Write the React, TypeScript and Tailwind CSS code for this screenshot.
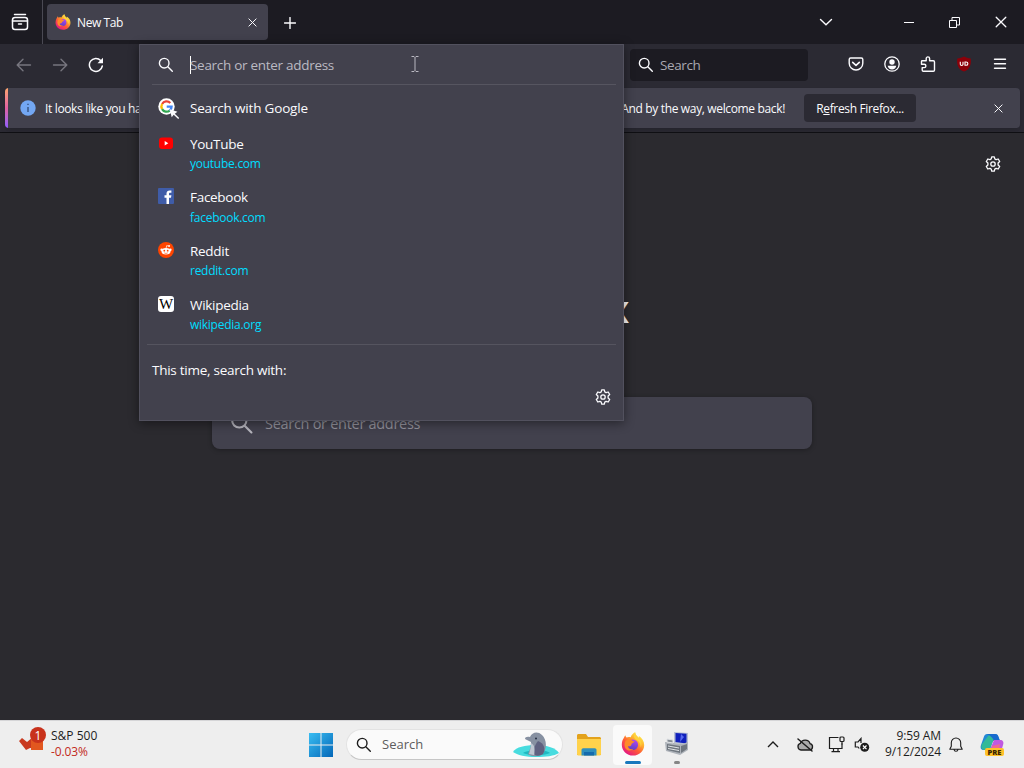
import React from 'react';

interface IconProps {
  className?: string;
}

interface Site {
  name: string;
  url: string;
  icon: React.ReactNode;
}

const SearchIcon: React.FC<IconProps> = ({ className }) => (
  <svg viewBox="0 0 16 16" fill="none" stroke="currentColor" strokeWidth="1.4" strokeLinecap="round" className={className}>
    <circle cx="6.2" cy="6.2" r="4.8" />
    <path d="M9.8 9.8l4.500 4.500" />
  </svg>
);

const GearIcon: React.FC<IconProps> = ({ className }) => (
  <svg viewBox="0 0 16 16" fill="none" stroke="currentColor" strokeWidth="1.3" strokeLinejoin="round" className={className}>
    <path d="M6.7 .8h2.6l.5 2.1 1.3.8 2.1-.7 1.5 2.5-1.6 1.5v2l1.6 1.5-1.5 2.5-2.1-.7-1.3.8-.5 2.1H6.7l-.5-2.1-1.3-.8-2.1.7-1.5-2.5L2.9 9V7L1.3 5.5 2.8 3l2.1.7 1.3-.8z" />
    <circle cx="8" cy="8" r="2.2" />
  </svg>
);

const CloseIcon: React.FC<IconProps> = ({ className }) => (
  <svg viewBox="0 0 10 10" fill="none" stroke="currentColor" strokeWidth="1.1" strokeLinecap="round" className={className}>
    <path d="M1 1l8 8M9 1L1 9" />
  </svg>
);

const FirefoxIcon: React.FC<IconProps> = ({ className }) => (
  <svg viewBox="0 0 24 24" className={className}>
    <defs>
      <linearGradient id="ffBody" x1="0.85" y1="0.1" x2="0.2" y2="0.95">
        <stop offset="0" stopColor="#fff44f" />
        <stop offset=".3" stopColor="#ffb02e" />
        <stop offset=".6" stopColor="#ff5a36" />
        <stop offset="1" stopColor="#e31587" />
      </linearGradient>
      <linearGradient id="ffGlobe" x1="0.6" y1="0" x2="0.3" y2="1">
        <stop offset="0" stopColor="#b146f0" />
        <stop offset="1" stopColor="#5b3fc4" />
      </linearGradient>
    </defs>
    <path fill="url(#ffBody)" d="M2.5 6.5C3 5.2 3.8 4.1 4.3 3.3c.2 1 .6 1.7 1.2 2.3C7 4.8 8.4 4.9 9.7 5.3c.8-2.4 2.5-4.2 4.4-5 .2 2.8 2.1 3.9 3.9 5.6 0-.8-.1-1.5-.4-2.2 3.4 2 5.6 5.3 5.6 9.3C23.2 19 18.2 23.6 12 23.6S.8 18.7.8 12.7c0-2.3.6-4.5 1.7-6.2z" />
    <circle cx="11.9" cy="12.8" r="5.2" fill="url(#ffGlobe)" />
    <path fill="#ff8a27" d="M4.6 8.7c1.6-1.7 4.1-2 6-1 .6 1 1.7 1.5 3.1 1.6-.3 1.2-1.7 1.5-2.7 2.2-.8.7-.4 1.9-1.5 2.5-1.2.5-2.2-.2-2.5.5-.3 1.9 3 3.5 5.4 2.3-2 2.7-7 2.2-8.4-1.4-.8-2.2-.5-4.9.6-6.7z" />
    <path fill="#ffd23e" d="M14.1 .3c.2 2.8 2.1 3.9 3.9 5.6 2.6 2.5 3.4 6.3 1.7 9.5.1-3.3-1.4-6.2-4.3-7.6-2.5-1.2-3.1-4-1.3-7.5z" />
  </svg>
);

const GoogleIcon = () => (
  <svg viewBox="0 0 22 22" className="h-[22px] w-[22px]">
    <circle cx="8.5" cy="8.5" r="8.2" fill="#fff" />
    <g fill="none" strokeWidth="2.3">
      <path d="M12.3 5.1A5.1 5.1 0 0 0 4.1 6" stroke="#ea4335" />
      <path d="M4.1 6a5.1 5.1 0 0 0 0 5.1" stroke="#fbbc05" />
      <path d="M4.1 11.1a5.1 5.1 0 0 0 7.6 1.5" stroke="#34a853" />
      <path d="M11.7 12.6a5.1 5.1 0 0 0 1.9-4H8.7" stroke="#4285f4" />
    </g>
    <path d="M11.8 11.300l7.600 2.500-2.600 2 4.400 4.200-1 1-4.500-4.300-2 2.600z" fill="#fbfbfe" />
  </svg>
);

const sites: Site[] = [
  {
    name: 'YouTube',
    url: 'youtube.com',
    icon: (
      <svg viewBox="0 0 16 16" className="h-4 w-4">
        <rect x="1" y="2.5" width="14" height="11.5" rx="3" fill="#f00" />
        <path d="M6.7 6.1v4.4l3.6-2.2z" fill="#fff" />
      </svg>
    ),
  },
  {
    name: 'Facebook',
    url: 'facebook.com',
    icon: (
      <svg viewBox="0 0 16 16" className="h-4 w-4">
        <rect width="16" height="16" rx="1" fill="#3f5ca8" />
        <path d="M8.5 16V9.7h-2V7.2h2V5.6c0-2.1 1.3-3.2 3.2-3.2.8 0 1.4.1 1.7.1v2.2h-1.2c-1 0-1.2.6-1.2 1.2v1.3h2.4l-.4 2.5h-2V16z" fill="#fff" />
      </svg>
    ),
  },
  {
    name: 'Reddit',
    url: 'reddit.com',
    icon: (
      <svg viewBox="0 0 16 16" className="h-4 w-4">
        <circle cx="8" cy="8" r="8" fill="#ff4500" />
        <ellipse cx="8" cy="9.3" rx="4.5" ry="3.2" fill="#fff" />
        <circle cx="3.6" cy="7.7" r="1.2" fill="#fff" />
        <circle cx="12.4" cy="7.7" r="1.2" fill="#fff" />
        <path d="M8 6.5l.7-2.9 2.2.5" fill="none" stroke="#fff" strokeWidth=".7" />
        <circle cx="11.1" cy="4" r=".9" fill="#fff" />
        <circle cx="6.3" cy="8.7" r=".9" fill="#ff4500" />
        <circle cx="9.7" cy="8.7" r=".9" fill="#ff4500" />
        <path d="M6.2 10.8c1 .8 2.6.8 3.6 0" fill="none" stroke="#ff4500" strokeWidth=".6" />
      </svg>
    ),
  },
  {
    name: 'Wikipedia',
    url: 'wikipedia.org',
    icon: (
      <span className="flex h-4 w-4 items-center justify-center rounded-[3px] bg-white pt-px font-['Liberation_Serif',serif] text-[15px] leading-none text-black">
        W
      </span>
    ),
  },
];

const TabBar = () => (
  <div className="flex h-11 shrink-0 bg-[#1c1b22]">
    <div className="flex w-[43px] items-center justify-center border-r border-[#4a4953] pr-0.5">
      <svg viewBox="0 0 18 18" className="h-[18px] w-[18px]" fill="none" stroke="#fbfbfe" strokeWidth="1.5" strokeLinecap="round">
        <path d="M3.5 1.5h11" />
        <rect x="1.5" y="4.5" width="15" height="12" rx="2.5" />
        <path d="M1.5 8h15M7.5 11h3" />
      </svg>
    </div>
    <div className="mt-1 ml-1 flex h-9 w-[221px] items-center rounded bg-[#42414d] pr-[11px] pl-2">
      <FirefoxIcon className="h-4 w-4" />
      <span className="mt-0.5 ml-1.5 flex-1 text-[12px] tracking-[-0.4px]">New Tab</span>
      <CloseIcon className="h-[9px] w-[9px]" />
    </div>
    <svg viewBox="0 0 12 12" className="mt-[17px] ml-4 h-3 w-3" stroke="#fbfbfe" strokeWidth="1.4" strokeLinecap="round">
      <path d="M6 .5v11M.5 6h11" />
    </svg>
    <div className="ml-auto flex items-center pr-[17px]">
      <svg viewBox="0 0 14 8" className="mr-[71px] h-2 w-[14px]" fill="none" stroke="#fbfbfe" strokeWidth="1.4" strokeLinecap="round">
        <path d="M1.5 1.5L7 6.7l5.5-5.2" />
      </svg>
      <span className="mr-[35px] h-px w-[10px] bg-[#fbfbfe]" />
      <svg viewBox="0 0 11 11" className="mr-[35px] h-[11px] w-[11px]" fill="none" stroke="#fbfbfe">
        <path d="M.5 3.5h7v7h-7zM3 3.5v-3h7.5V8h-3" />
      </svg>
      <CloseIcon className="h-3 w-3" />
    </div>
  </div>
);

const NavBar = () => (
  <div className="flex h-11 shrink-0 items-center bg-[#2b2a33] pb-0.5">
    <svg viewBox="0 0 16 14" className="ml-4 h-[14px] w-4" fill="none" stroke="#77767f" strokeWidth="1.4" strokeLinecap="round" strokeLinejoin="round">
      <path d="M14.5 7h-13M7 1.2L1.2 7 7 12.8" />
    </svg>
    <svg viewBox="0 0 16 14" className="ml-5 h-[14px] w-4" fill="none" stroke="#77767f" strokeWidth="1.4" strokeLinecap="round" strokeLinejoin="round">
      <path d="M1.5 7h13M9 1.2L14.8 7 9 12.8" />
    </svg>
    <svg viewBox="0 0 16 16" className="ml-5 h-4 w-4" fill="none" stroke="#fbfbfe" strokeWidth="1.5" strokeLinecap="round">
      <path d="M14.3 9A6.5 6.5 0 1 1 12.7 3.5" />
      <path d="M15 .8v5.5H9.5z" fill="#fbfbfe" stroke="none" />
    </svg>
    <div className="-mt-px ml-[526px] flex h-8 w-[178px] items-center rounded bg-[#1c1b22] pl-2">
      <SearchIcon className="h-4 w-4 text-[#fbfbfe]" />
      <span className="mt-px ml-1.5 text-[13.5px] tracking-[-0.4px] text-[#a9a8b1]">Search</span>
    </div>
    <div className="-mt-[2px] ml-auto flex items-center gap-5 pr-[17px] text-[#fbfbfe]">
      <svg viewBox="0 0 16 16" className="h-4 w-4" fill="none" stroke="currentColor" strokeWidth="1.4" strokeLinecap="round" strokeLinejoin="round">
        <path d="M2.7 2h10.6c.8 0 1.5.6 1.5 1.4v3.8a6.8 6.8 0 0 1-13.6 0V3.4C1.2 2.6 1.9 2 2.7 2z" />
        <path d="M4.7 6.3L8 9.3l3.3-3" strokeWidth="1.6" />
      </svg>
      <svg viewBox="0 0 16 16" className="h-4 w-4" fill="none" stroke="currentColor" strokeWidth="1.3">
        <circle cx="8" cy="8" r="7.2" />
        <circle cx="8" cy="6" r="2.7" fill="currentColor" stroke="none" />
        <path d="M3.7 9.7h8.6c-.3 2.2-2 3.7-4.3 3.7s-4-1.5-4.3-3.7z" fill="currentColor" stroke="none" />
      </svg>
      <svg viewBox="0 0 16 16" className="h-4 w-4" fill="none" stroke="currentColor" strokeWidth="1.4" strokeLinejoin="round">
        <path d="M2.2 4.7h4V2.6a1.7 1.7 0 0 1 3.4 0v2.1h3.7c.7 0 1.2.5 1.2 1.2v8.2c0 .7-.5 1.2-1.2 1.2H3.4c-.7 0-1.2-.5-1.2-1.2v-2.5h2a1.7 1.7 0 0 0 0-3.4H1.500V5.400c0-.4.3-.7.7-.7z" />
      </svg>
      <svg viewBox="0 0 16 16" className="h-4 w-4">
        <path d="M8 .5c2 1.200 4.200 1.700 6.700 1.900C15.500 9 13.500 13.500 8 15.500 2.500 13.500.5 9 1.300 2.400 3.800 2.200 6 1.700 8 .5z" fill="#8c0009" />
        <path d="M4.3 5.8v2.4c0 1.7 2.7 1.7 2.7 0V5.8M9 6v3.3h1c2.5 0 2.5-3.3 0-3.3z" fill="none" stroke="#fff" strokeWidth="1.1" />
      </svg>
      <svg viewBox="0 0 14 12" className="ml-px h-3 w-[14px]" stroke="currentColor" strokeWidth="1.4" strokeLinecap="round">
        <path d="M1.5 1.2h11M1.5 5.7h11M1.5 10.2h11" />
      </svg>
    </div>
  </div>
);

const Notification = () => (
  <div className="h-[45px] shrink-0 border-b border-[#101014] bg-[#2b2a33] pr-1 pl-[5px]">
    <div className="flex h-10 items-center overflow-hidden rounded bg-[#42414d] shadow-md">
      <span className="h-full w-[3px] bg-gradient-to-b from-[#ffa56a] via-[#e060a0] to-[#9059ff]" />
      <svg viewBox="0 0 16 16" className="ml-3 h-4 w-4 shrink-0">
        <circle cx="8" cy="8" r="7.7" fill="#73a7f3" />
        <path d="M8 7v5M8 3.7V5" stroke="#34517d" strokeWidth="1.4" />
      </svg>
      <div className="mt-0.5 ml-[9px] flex w-[740px] shrink-0 justify-between text-[12px] tracking-[-0.35px] whitespace-nowrap">
        <span>It looks like you ha</span>
        <span>And by the way, welcome back!</span>
      </div>
      <button className="ml-[19px] h-7 w-28 shrink-0 rounded bg-[#2b2a33] pt-px text-[12px] font-medium tracking-[-0.35px] whitespace-nowrap">
        R<u>e</u>fresh Firefox...
      </button>
      <CloseIcon className="mr-[17px] ml-auto h-[9px] w-[9px]" />
    </div>
  </div>
);

const UrlPanel = () => (
  <div className="absolute top-11 left-[139px] h-[377px] w-[485px] border border-[#52515e] bg-[#42414d] shadow-[0_2px_10px_rgba(0,0,0,0.45)]">
    <div className="mr-[7px] ml-3 flex h-10 items-center border-b border-[#565560] pl-1.5">
      <SearchIcon className="h-4 w-4" />
      <span className="ml-4 h-[18px] w-px bg-white" />
      <span className="mt-0.5 -ml-px text-[13.5px] tracking-[-0.29px] text-[#bbbac3]">Search or enter address</span>
      <svg viewBox="0 0 8 16" className="-mt-px ml-[77px] h-4 w-2" fill="none" stroke="#c6c5ce" strokeWidth=".9">
        <path d="M.5 .5H3l1 1 1-1h2.5M4 1.5v13M.5 15.500H3l1-1 1 1h2.500" />
      </svg>
    </div>
    <div className="flex h-[48.6px] items-center pl-[18px]">
      <GoogleIcon />
      <span className="-mt-0.5 ml-2.5 text-[13.5px] tracking-[-0.18px]">Search with Google</span>
    </div>
    {sites.map((site) => (
      <div key={site.name} className="flex h-[53.7px] pl-[18px]">
        <span className="mt-px h-4 w-4">{site.icon}</span>
        <div className="ml-4">
          <p className="text-[13.5px] leading-5 tracking-[-0.29px]">{site.name}</p>
          <p className="mt-[0.3px] text-[12px] leading-5 tracking-[-0.26px] text-[#00ddff]">{site.url}</p>
        </div>
      </div>
    ))}
    <div className="-mt-1 mr-[7px] ml-[7px] border-t border-[#55545f] px-[5px] pt-[15px]">
      <p className="text-[13.5px] leading-5 tracking-[-0.26px]">This time, search with:</p>
      <GearIcon className="mt-[9px] ml-auto h-4 w-4" />
    </div>
  </div>
);

const NewTabPage = () => (
  <div className="flex flex-1 flex-col items-center bg-[#2b2a2f]">
    <GearIcon className="mt-[23px] mr-[23px] h-4 w-4 self-end" />
    <div className="mt-24 flex h-20 w-[232px] items-center justify-between">
      <FirefoxIcon className="h-20 w-20" />
      <span className="text-[38px] font-bold tracking-tight">Firefox</span>
    </div>
    <div className="mt-[49px] flex h-[52px] w-[600px] items-center rounded-lg bg-[#42414d] pl-[18px] shadow-[0_1px_5px_rgba(0,0,0,0.3)]">
      <SearchIcon className="h-6 w-6 text-[#b6b5bd]" />
      <span className="mt-0.5 ml-[11px] text-[14.5px] tracking-[-0.29px] text-[#93929c]">Search or enter address</span>
    </div>
  </div>
);

const Taskbar = () => (
  <div className="flex h-12 shrink-0 items-center border-t border-[#d5d5d7] bg-[#eeeeee] text-[#1d1d1d]">
    <svg viewBox="0 0 28 26" className="mb-3 ml-[19px] h-[26px] w-7">
      <path d="M0 15l3-3 5 4 6-5v11H11l-4 2z" fill="#c93a20" />
      <path d="M12 13h12v11H12z" fill="#e2571f" />
      <circle cx="19" cy="9" r="8" fill="#c8321c" />
      <text x="19" y="13.5" textAnchor="middle" fontSize="12" fill="#fff">1</text>
    </svg>
    <div className="mb-px ml-1 w-[254px] text-[12px] leading-4">
      <p>S&amp;P 500</p>
      <p className="text-[12px] tracking-[-0.1px] text-[#c22b1c]">-0.03%</p>
    </div>
    <svg viewBox="0 0 24 24" className="ml-1 h-6 w-6">
      <defs>
        <linearGradient id="win" x1="0" y1="0" x2="24" y2="24" gradientUnits="userSpaceOnUse">
          <stop stopColor="#39bdf2" />
          <stop offset="1" stopColor="#0467b8" />
        </linearGradient>
      </defs>
      <path d="M0 0h11.5v11.5H0zM12.5 0H24v11.5H12.5zM0 12.5h11.5V24H0zM12.5 12.5H24V24H12.5z" fill="url(#win)" />
    </svg>
    <div className="ml-[13px] flex h-[31px] w-[217px] items-center rounded-full border border-[#e3e3e3] border-b-[#c6c6c6] bg-[#fafafa] pl-[9px]">
      <SearchIcon className="h-4 w-4" />
      <span className="ml-2.5 flex-1 text-[13px] text-[#5d5d5d]">Search</span>
      <svg viewBox="0 0 46 25" className="mr-[3px] h-[25px] w-[46px]">
        <path d="M0 20c3-5 12-7 23-7s20 3 23 8c-5 3-13 4-23 4S4 23 0 20z" fill="#48dcdf" />
        <path d="M10 21c5-3 22-4 27 0-7 3-20 3-27 0z" fill="#20b9c2" />
        <path d="M15 22c2-4 3-8 3-12l-6-3c0-2 2-2.5 5-2 2-5 8-6 12-2 5 5 5 13 1 19-4 3-12 3-15 0z" fill="#8791a2" />
        <path d="M25 9c6 2 8 8 5 13-3 2-6 2-8 1-2-4-1-9 3-14z" fill="#5f6180" />
        <path d="M18 11c4 2 4 7 3 12l-5-1c1-3 2-7 2-11z" fill="#bec7d2" />
        <circle cx="23" cy="6.5" r="1" fill="#273044" />
      </svg>
    </div>
    <svg viewBox="0 0 24 24" className="ml-[14px] h-6 w-6">
      <path d="M0 2.5C0 1.5.7 1 1.5 1H9l2 3h11.5c.8 0 1.5.7 1.5 1.5V22H0z" fill="#e3a21c" />
      <path d="M0 6h24v15c0 .8-.7 1.5-1.5 1.5h-21C.7 22.5 0 21.8 0 21z" fill="#ffd24c" />
      <path d="M4.5 22.5V17c0-1 .7-1.7 1.7-1.7h11.6c1 0 1.7.7 1.7 1.7v5.5z" fill="#2f8fbd" />
      <path d="M7 19h10v3.5H7z" fill="#146bad" />
    </svg>
    <div className="ml-3 flex h-10 w-[39px] flex-col items-center rounded bg-[#fafafa] pt-[7px]">
      <FirefoxIcon className="h-6 w-6" />
      <span className="mt-[5px] h-[3px] w-4 rounded-full bg-[#1878bd]" />
    </div>
    <div className="ml-[13px] flex h-10 w-6 flex-col items-center pt-1.5">
      <svg viewBox="0 0 24 24" className="h-6 w-6">
        <path d="M9 1l14 1v12l-14-2z" fill="#b5bdd3" />
        <path d="M10.5 2l11 .7v9.8l-11-1.5z" fill="#1020bc" />
        <path d="M16 3l3 3-4 5z" fill="#5668ef" />
        <path d="M0 11l17 2 6-2v8l-8 5-14-4z" fill="#aeb3ba" />
        <path d="M2 13l13 2v7L2 19zM16 15l6-2v5l-6 4z" fill="#70777f" />
        <path d="M3 15l11 2M3 17.5l11 2M2 8l6 1v3l-6-1z" stroke="#dfe2e5" fill="#858c94" />
      </svg>
      <span className="mt-1.5 h-[3px] w-1.5 rounded-full bg-[#858585]" />
    </div>
    <div className="ml-auto flex items-center pr-5">
      <svg viewBox="0 0 12 7" className="h-[7px] w-3" fill="none" stroke="currentColor" strokeWidth="1.4">
        <path d="M1 6l5-5 5 5" />
      </svg>
      <svg viewBox="0 0 18 14" className="ml-[17px] h-[14px] w-[18px]" fill="none" stroke="currentColor" strokeWidth="1.3" strokeLinecap="round">
        <path d="M5 12h8.5a3.2 3.2 0 0 0 .6-6.3A5.2 5.2 0 0 0 4.3 5.4 3.4 3.4 0 0 0 5 12z" fill="#aaa" />
        <path d="M2 1l14 12" strokeWidth="1.5" />
      </svg>
      <svg viewBox="0 0 17 17" className="ml-[14px] h-[17px] w-[17px]" fill="none" stroke="currentColor" strokeWidth="1.2">
        <path d="M10.5 1.5h-9v11H14v-5M5.5 12.5v3M10 12.5v3M3.5 15.7H12" />
        <rect x="12" y="1" width="4" height="4.5" rx="1" />
        <path d="M14 5.5v3" />
      </svg>
      <svg viewBox="0 0 16 16" className="ml-[9px] h-4 w-4" fill="none" stroke="currentColor" strokeWidth="1.2">
        <path d="M7 6V1.5L4 5H1.3v5H4l1.2 1.5" />
        <circle cx="10.7" cy="10.3" r="4.5" fill="currentColor" stroke="none" />
        <path d="M8.9 8.5l3.6 3.6M12.5 8.5l-3.6 3.6" stroke="#fff" />
      </svg>
      <div className="mb-px ml-[14px] w-[57px] text-right text-[12px] leading-4 tracking-[-0.1px]">
        <p>9:59 AM</p>
        <p>9/12/2024</p>
      </div>
      <svg viewBox="0 0 14 16" className="ml-2 h-4 w-[14px]" fill="none" stroke="currentColor" strokeWidth="1.1" strokeLinejoin="round">
        <path d="M7 1a4.7 4.7 0 0 0-4.7 4.7v3.5L.8 12.3h12.4l-1.5-3.1V5.7A4.7 4.7 0 0 0 7 1zM5 12.5c.3 2.3 3.7 2.3 4 0" />
      </svg>
      <svg viewBox="0 0 24 24" className="ml-[17px] h-6 w-6">
        <path d="M7 1h8c2 0 3 1 3.5 3L20 8h-7l-4 9H4c-3 0-4-2-3-5L4 3.5C4.5 2 5.5 1 7 1z" fill="#2289d5" />
        <path d="M5 7l4-5c4-2 8-1 9 2l1 4h-6l-3 9H4C1 16 1 13 2 11z" fill="#32b998" />
        <path d="M7 1h8c2 0 3 1 3.5 3L20 8h-6c-1-3-3-5-7-7z" fill="#1769ce" />
        <path d="M14 7h6c3 0 4 2 3 5l-2 7H9z" fill="#c05ae0" />
        <path d="M12 13l8-2-1 7h-8z" fill="#ee6894" />
        <rect x="5" y="15" width="19" height="8" rx="2" fill="#ffc229" />
        <text x="14.5" y="21.6" textAnchor="middle" fontSize="7.5" fontWeight="800" fill="#3a2500">PRE</text>
      </svg>
    </div>
  </div>
);

const App: React.FC = () => {
  return (
    <div className="relative flex h-[768px] w-[1024px] flex-col overflow-hidden font-['Open_Sans','Noto_Sans',sans-serif] text-[#fbfbfe]">
      <TabBar />
      <NavBar />
      <Notification />
      <NewTabPage />
      <Taskbar />
      <UrlPanel />
    </div>
  );
};

export default App;
